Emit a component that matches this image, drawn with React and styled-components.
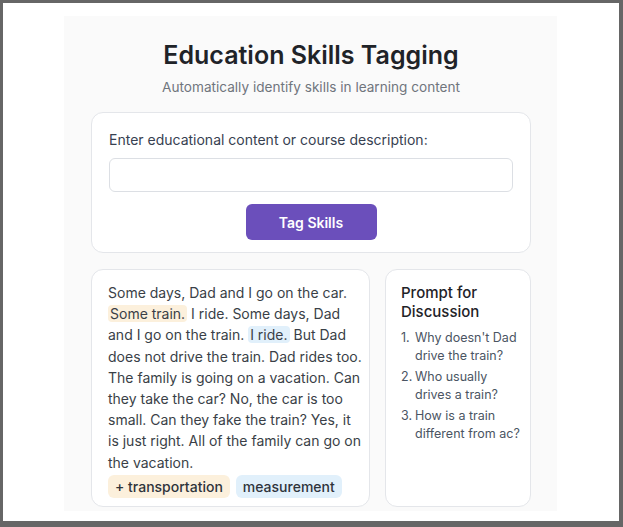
import styled, { createGlobalStyle } from "styled-components";

const GlobalStyle = createGlobalStyle`
  html, body {
    margin: 0;
    padding: 0;
    background: #ffffff;
  }
  body {
    font-family: Inter, "Noto Sans", "Liberation Sans", sans-serif;
    -webkit-font-smoothing: antialiased;
  }
`;

const prompts = [
  "Why doesn't Dad drive the train?",
  "Who usually drives a train?",
  "How is a train different from ac?",
];

export default function App() {
  return (
    <>
      <GlobalStyle />
      <Frame>
        <Container>
          <Title>Education Skills Tagging</Title>
          <Subtitle>Automatically identify skills in learning content</Subtitle>

          <InputCard>
            <Label htmlFor="content">Enter educational content or course description:</Label>
            <TextInput id="content" type="text" />
            <TagButton>Tag Skills</TagButton>
          </InputCard>

          <ResultRow>
            <StoryCard>
              <Story>
                Some days, Dad and I go on the car.{" "}
                <Mark $tone="orange">Some train.</Mark> I ride. Some days, Dad
                and I go on the train. <Mark $tone="blue">I ride.</Mark> But Dad
                does not drive the train. Dad rides too. The family is going on a
                vacation. Can they take the car? No, the car is too small. Can
                they fake the train? Yes, it is just right. All of the family can
                go on the vacation.
              </Story>
              <Tags>
                <Tag $tone="orange">+ transportation</Tag>
                <Tag $tone="blue">measurement</Tag>
              </Tags>
            </StoryCard>

            <PromptCard>
              <PromptTitle>Prompt for Discussion</PromptTitle>
              <PromptList>
                {prompts.map((p, i) => (
                  <PromptItem key={i}>
                    <Num>{i + 1}.</Num>
                    <span>{p}</span>
                  </PromptItem>
                ))}
              </PromptList>
            </PromptCard>
          </ResultRow>
        </Container>
      </Frame>
    </>
  );
}

/* STYLES */
const tones = {
  orange: "#fcf0dc",
  blue: "#e1f0fb",
};

const Frame = styled.div`
  width: 623px;
  height: 527px;
  box-sizing: border-box;
  border-style: solid;
  border-color: #666666;
  border-width: 3px 4px 6px 3px;
  background: #ffffff;
  padding-top: 13px;
  overflow: hidden;
`;

const Container = styled.div`
  margin-left: 61px;
  width: 493px;
  height: 495px;
  box-sizing: border-box;
  background: #fafafa;
  padding: 23px 26px 0 27px;

  display: flex;
  flex-direction: column;
  align-items: stretch;
`;

const Title = styled.h1`
  margin: 0;
  font-size: 25px;
  line-height: 32px;
  font-weight: 600;
  color: #1f2328;
  text-align: center;
`;

const Subtitle = styled.p`
  margin: 6px 0 0;
  font-size: 13.6px;
  line-height: 20px;
  color: #70757d;
  text-align: center;
`;

const Card = styled.div`
  background: #ffffff;
  border: 1px solid #e4e6ea;
  border-radius: 12px;
  box-sizing: border-box;
`;

const InputCard = styled(Card)`
  margin-top: 15px;
  height: 141px;
  padding: 17px 17px 0;

  display: flex;
  flex-direction: column;
  align-items: center;
`;

const Label = styled.label`
  align-self: flex-start;
  font-size: 14px;
  line-height: 20px;
  color: #374151;
`;

const TextInput = styled.input`
  margin-top: 8px;
  width: 100%;
  height: 34px;
  box-sizing: border-box;
  border: 1px solid #dcdfe4;
  border-radius: 6px;
  background: #ffffff;
  outline: none;
`;

const TagButton = styled.button`
  margin-top: 12px;
  width: 131px;
  height: 36px;
  border: none;
  border-radius: 6px;
  background: #6b4fbb;
  color: #ffffff;
  font-family: inherit;
  font-size: 14px;
  font-weight: 600;
  cursor: pointer;
`;

const ResultRow = styled.div`
  margin-top: 16px;
  height: 238px;
  display: flex;
  gap: 15px;
`;

const StoryCard = styled(Card)`
  flex: 0 0 279px;
  padding: 12px 4px 0 16px;
  display: flex;
  flex-direction: column;
`;

const Story = styled.p`
  margin: 0;
  font-size: 14px;
  line-height: 21.2px;
  color: #3a3f47;
`;

const Mark = styled.span`
  background: ${p => tones[p.$tone]};
  border-radius: 4px;
  padding: 0 2px;
`;

const Tags = styled.div`
  margin-top: 2px;
  display: flex;
  gap: 6px;
`;

const Tag = styled.span`
  height: 23px;
  padding: 0 7px;
  border-radius: 6px;
  background: ${p => tones[p.$tone]};
  display: flex;
  align-items: center;
  font-size: 14px;
  font-weight: 500;
  color: #2f343b;
`;

const PromptCard = styled(Card)`
  flex: 0 0 146px;
  padding: 13px 6px 0 15px;
`;

const PromptTitle = styled.h2`
  margin: 0;
  font-size: 15px;
  line-height: 19px;
  font-weight: 500;
  color: #1f2328;
`;

const PromptList = styled.ol`
  margin: 8px 0 0;
  padding: 0;
  list-style: none;
  display: flex;
  flex-direction: column;
  gap: 4px;
`;

const PromptItem = styled.li`
  display: flex;
  font-size: 12.5px;
  line-height: 17.5px;
  color: #4b5563;
`;

const Num = styled.span`
  flex: 0 0 14px;
`;
